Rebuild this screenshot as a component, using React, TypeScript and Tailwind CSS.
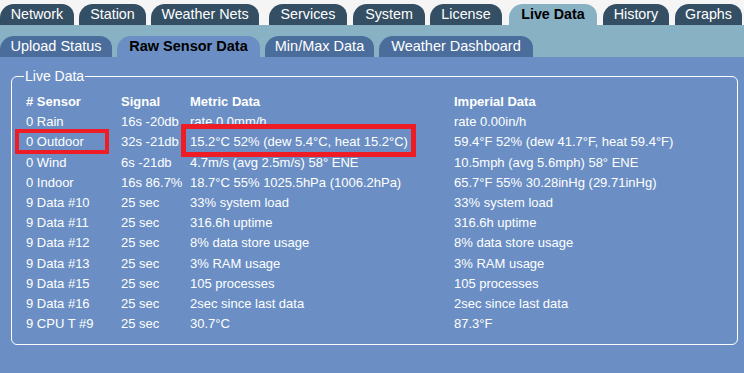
import React from "react";

const mainTabs = [
  { label: "Network", cls: "ml-0 w-[74px]" },
  { label: "Station", cls: "ml-[5px] w-[67px]" },
  { label: "Weather Nets", cls: "ml-[5px] w-[108px]" },
  { label: "Services", cls: "ml-[10px] w-[78px]" },
  { label: "System", cls: "ml-[6px] w-[72px]" },
  { label: "License", cls: "ml-[5px] w-[72px]" },
  { label: "Live Data", cls: "ml-[7px] w-[88px]", active: true },
  { label: "History", cls: "ml-[6px] w-[66px]" },
  { label: "Graphs", cls: "ml-[6px] w-[67px]" },
];

const subTabs = [
  { label: "Upload Status", cls: "ml-0 w-[112px]" },
  { label: "Raw Sensor Data", cls: "ml-[5px] w-[143px]", active: true },
  { label: "Min/Max Data", cls: "ml-[5px] w-[109px]" },
  { label: "Weather Dashboard", cls: "ml-[5px] w-[154px]" },
];

const rows = [
  ["0 Rain", "16s -20db", "rate 0.0mm/h", "rate 0.00in/h"],
  ["0 Outdoor", "32s -21db", "15.2°C 52% (dew 5.4°C, heat 15.2°C)", "59.4°F 52% (dew 41.7°F, heat 59.4°F)"],
  ["0 Wind", "6s -21db", "4.7m/s (avg 2.5m/s) 58° ENE", "10.5mph (avg 5.6mph) 58° ENE"],
  ["0 Indoor", "16s 86.7%", "18.7°C 55% 1025.5hPa (1006.2hPa)", "65.7°F 55% 30.28inHg (29.71inHg)"],
  ["9 Data #10", "25 sec", "33% system load", "33% system load"],
  ["9 Data #11", "25 sec", "316.6h uptime", "316.6h uptime"],
  ["9 Data #12", "25 sec", "8% data store usage", "8% data store usage"],
  ["9 Data #13", "25 sec", "3% RAM usage", "3% RAM usage"],
  ["9 Data #15", "25 sec", "105 processes", "105 processes"],
  ["9 Data #16", "25 sec", "2sec since last data", "2sec since last data"],
  ["9 CPU T #9", "25 sec", "30.7°C", "87.3°F"],
];

export default function App() {
  return (
    <div className="w-[744px] h-[373px] overflow-hidden bg-[#6b8fc4] font-['Liberation_Sans',Arial,sans-serif] text-white">
      {/* main tabs */}
      <div className="h-[25px] bg-[#f5f5f5] flex items-end">
        {mainTabs.map((t) => (
          <div
            key={t.label}
            className={
              "h-[21px] shrink-0 flex items-center justify-center rounded-tl-[14px] rounded-tr-[12px] text-[14.3px] leading-none " +
              t.cls +
              (t.active ? " bg-[#88b1c4] text-black font-bold" : " bg-[#344e63] text-white")
            }
          >
            {t.label}
          </div>
        ))}
      </div>

      {/* sub tabs */}
      <div className="h-[32px] bg-[#88b1c4] flex items-end">
        {subTabs.map((t) => (
          <div
            key={t.label}
            className={
              "h-[21px] shrink-0 flex items-center justify-center rounded-tl-[14px] rounded-tr-[12px] text-[14.5px] leading-none " +
              t.cls +
              (t.active ? " bg-[#6b8fc4] text-black font-bold" : " bg-[#4b6d9c] text-white")
            }
          >
            {t.label}
          </div>
        ))}
      </div>

      {/* live data box */}
      <fieldset className="mt-[11px] ml-[11px] w-[727px] border border-white rounded-[6px] px-[12px] pb-[10px]">
        <legend className="px-[1px] text-[14px] leading-[16px]">Live Data</legend>
        <div className="ml-[2px] mt-[8px] grid grid-cols-[95px_69px_264px_1fr] auto-rows-[20.2px] text-[13px] leading-[20.2px] whitespace-nowrap">
          <div className="font-bold">
            # Sensor
          </div>
          <div className="font-bold">Signal</div>
          <div className="font-bold">Metric Data</div>
          <div className="font-bold">Imperial Data</div>
          {rows.map((r, i) => (
            <React.Fragment key={i}>
              <div className="relative">
                {r[0]}
                {i === 1 && (
                  <div className="absolute left-[-11px] top-[-3px] w-[94px] h-[25px] border-[4px] border-[#ee1c24]" />
                )}
              </div>
              <div>{r[1]}</div>
              <div className="relative">
                {r[2]}
                {i === 1 && (
                  <div className="absolute left-[-9px] top-[-8px] w-[235px] h-[33px] border-[5px] border-[#ee1c24]" />
                )}
              </div>
              <div>{r[3]}</div>
            </React.Fragment>
          ))}
        </div>
      </fieldset>
    </div>
  );
}
